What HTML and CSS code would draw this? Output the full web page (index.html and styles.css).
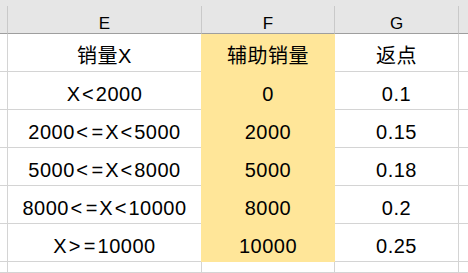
FILE: index.html
```html
<!DOCTYPE html>
<html lang="zh-CN">
<head>
<meta charset="utf-8">
<title>Sheet</title>
<link rel="stylesheet" href="styles.css">
</head>
<body>
<div class="sheet">
  <div class="strip"></div>

  <div class="hd stub"></div>
  <div class="hd">E</div>
  <div class="hd">F</div>
  <div class="hd">G</div>
  <div class="hd last"></div>

  <div class="c stub"></div>
  <div class="c">销量X</div>
  <div class="c y">辅助销量</div>
  <div class="c">返点</div>
  <div class="c last"></div>

  <div class="c stub"></div>
  <div class="c">X<span class="op">&lt;</span>2000</div>
  <div class="c y">0</div>
  <div class="c">0.1</div>
  <div class="c last"></div>

  <div class="c stub"></div>
  <div class="c">2000<span class="op">&lt;</span><span class="op">=</span>X<span class="op">&lt;</span>5000</div>
  <div class="c y">2000</div>
  <div class="c">0.15</div>
  <div class="c last"></div>

  <div class="c stub"></div>
  <div class="c">5000<span class="op">&lt;</span><span class="op">=</span>X<span class="op">&lt;</span>8000</div>
  <div class="c y">5000</div>
  <div class="c">0.18</div>
  <div class="c last"></div>

  <div class="c stub"></div>
  <div class="c">8000<span class="op">&lt;</span><span class="op">=</span>X<span class="op">&lt;</span>10000</div>
  <div class="c y">8000</div>
  <div class="c">0.2</div>
  <div class="c last"></div>

  <div class="c stub"></div>
  <div class="c">X<span class="op">&gt;</span><span class="op">=</span>10000</div>
  <div class="c y">10000</div>
  <div class="c">0.25</div>
  <div class="c last"></div>

  <div class="c stub"></div>
  <div class="c"></div>
  <div class="c"></div>
  <div class="c"></div>
  <div class="c last"></div>
</div>
</body>
</html>
```
FILE: styles.css
```css
html, body {
  margin: 0;
  padding: 0;
  background: #ffffff;
}

body {
  width: 468px;
  height: 273px;
  overflow: hidden;
  font-family: "Liberation Sans", "Noto Sans CJK SC", sans-serif;
  color: #000000;
}

.sheet {
  display: grid;
  height: 273px;
  overflow: hidden;
  grid-template-columns: 8px 194px 133px 124px 1fr;
  grid-template-rows: 6px 28px repeat(6, 38px) 1fr;
}

.strip {
  grid-column: 1 / -1;
  background: #e6e6e6;
}

.hd {
  background: #e6e6e6;
  border-right: 1px solid #c9c9c9;
  border-bottom: 1px solid #9e9e9e;
  display: flex;
  justify-content: center;
  align-items: flex-end;
  font-size: 17px;
  line-height: 1;
  padding-bottom: 1px;
}

.c {
  border-right: 1px solid #d4d4d4;
  border-bottom: 1px solid #d4d4d4;
  display: flex;
  justify-content: center;
  align-items: flex-end;
  font-size: 20px;
  line-height: 1;
  letter-spacing: 0.5px;
  padding-bottom: 5px;
  white-space: nowrap;
}

.op {
  margin: 0 1.5px;
}

.last {
  border-right: none;
}

.y {
  background: #ffe699;
  border-color: #ffe699;
  box-shadow: -1px 0 0 #ffe699;
}
```
